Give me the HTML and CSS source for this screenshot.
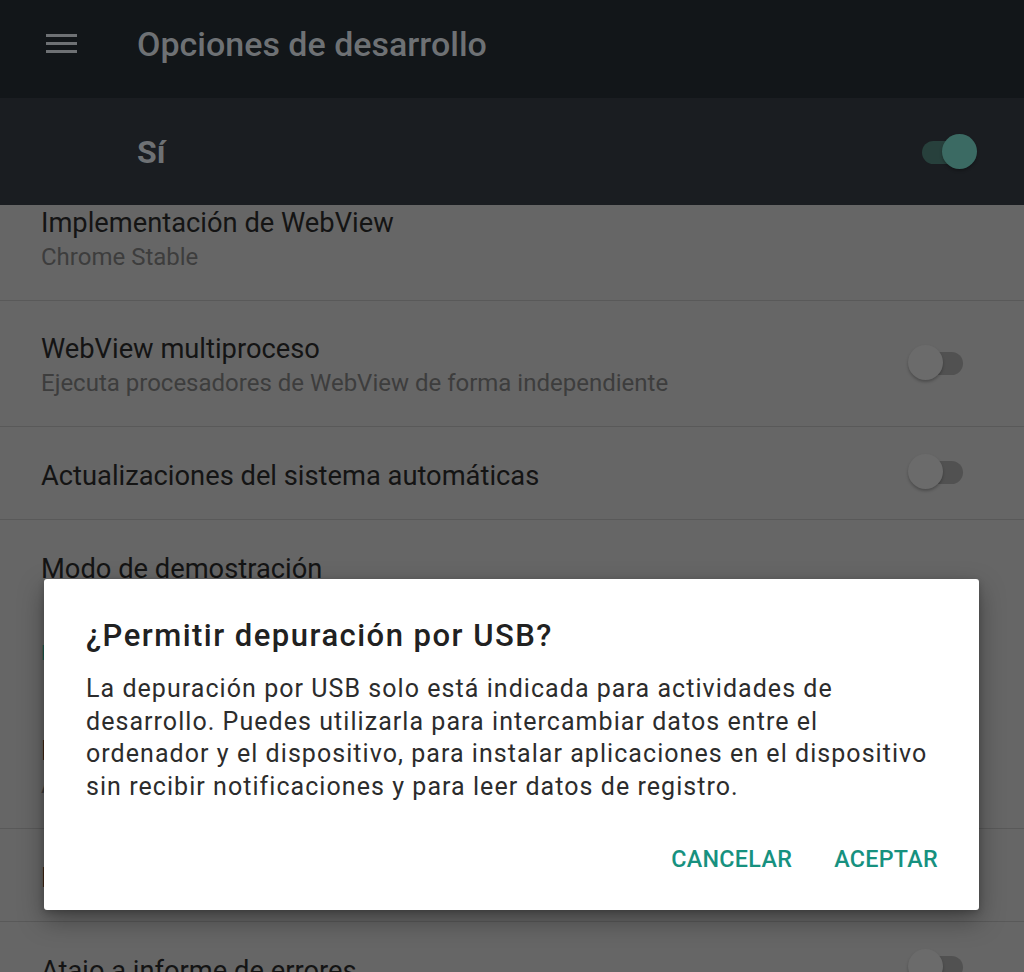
FILE: index.html
```html
<!DOCTYPE html>
<html lang="es">
<head>
<meta charset="utf-8">
<title>Opciones de desarrollo</title>
<link rel="stylesheet" href="styles.css">
</head>
<body>
<div class="screen">
  <header class="appbar">
    <div class="menu-icon"><span></span><span></span><span></span></div>
    <h1 class="appbar-title">Opciones de desarrollo</h1>
  </header>
  <div class="master">
    <span class="master-label">Sí</span>
    <span class="switch on"><span class="track"></span><span class="thumb"></span></span>
  </div>
  <div class="list-viewport">
    <ul class="list">
      <li class="item two">
        <div class="texts"><div class="title">Implementación de WebView</div><div class="summary">Chrome Stable</div></div>
      </li>
      <li class="item two">
        <div class="texts"><div class="title">WebView multiproceso</div><div class="summary">Ejecuta procesadores de WebView de forma independiente</div></div>
        <span class="switch"><span class="track"></span><span class="thumb"></span></span>
      </li>
      <li class="item one">
        <div class="texts"><div class="title">Actualizaciones del sistema automáticas</div></div>
        <span class="switch"><span class="track"></span><span class="thumb"></span></span>
      </li>
      <li class="item one nodiv">
        <div class="texts"><div class="title">Modo de demostración</div></div>
      </li>
      <li class="category">Depuración</li>
      <li class="item two">
        <div class="texts"><div class="title">Depuración por USB</div><div class="summary">Activar el modo de depuración cuando el USB esté conectado</div></div>
        <span class="switch"><span class="track"></span><span class="thumb"></span></span>
      </li>
      <li class="item one">
        <div class="texts"><div class="title">Revocar autorizaciones de depuración USB</div></div>
      </li>
      <li class="item one">
        <div class="texts"><div class="title">Atajo a informe de errores</div></div>
        <span class="switch"><span class="track"></span><span class="thumb"></span></span>
      </li>
    </ul>
  </div>

  <div class="dialog" role="dialog">
    <h2 class="dialog-title">¿Permitir depuración por USB?</h2>
    <p class="dialog-body">La depuración por USB solo está indicada para actividades de<br>desarrollo. Puedes utilizarla para intercambiar datos entre el<br>ordenador y el dispositivo, para instalar aplicaciones en el dispositivo<br>sin recibir notificaciones y para leer datos de registro.</p>
    <div class="dialog-actions">
      <button class="btn">CANCELAR</button>
      <button class="btn">ACEPTAR</button>
    </div>
  </div>
</div>
</body>
</html>
```

FILE: styles.css
```css
* { box-sizing: border-box; }
html, body { margin: 0; padding: 0; }
body {
  background: #666666;
  font-family: Roboto, "Noto Sans", sans-serif;
  width: 1024px;
  height: 972px;
  overflow: hidden;
}
.screen {
  position: relative;
  width: 1024px;
  height: 972px;
  overflow: hidden;
  display: flex;
  flex-direction: column;
}
.appbar {
  height: 98px;
  background: #121619;
  display: flex;
  align-items: center;
  flex-shrink: 0;
}
.menu-icon {
  width: 31px;
  margin-left: 46px;
  margin-top: -12px;
  display: flex;
  flex-direction: column;
  gap: 5px;
}
.menu-icon span {
  display: block;
  height: 3px;
  background: #6e7174;
}
.appbar-title {
  margin: -10px 0 0 60px;
  font-size: 34px;
  font-weight: 500;
  color: #6e7174;
}
.master {
  height: 107px;
  background: #1a1d21;
  display: flex;
  align-items: center;
  justify-content: space-between;
  padding: 0 47px 0 137px;
  flex-shrink: 0;
}
.master-label {
  font-size: 32px;
  font-weight: 700;
  color: #6e7174;
}
.switch {
  position: relative;
  width: 56px;
  height: 36px;
  flex-shrink: 0;
}
.item .switch { margin-top: -7px; }
.switch .track {
  position: absolute;
  left: 1px;
  right: 1px;
  top: 7px;
  height: 23px;
  border-radius: 12px;
  background: #515151;
}
.switch .thumb {
  position: absolute;
  left: 0;
  top: 0;
  width: 35px;
  height: 35px;
  border-radius: 50%;
  background: #6b6b6b;
  box-shadow: 0 2px 3px rgba(0,0,0,0.25);
}
.switch.on .track { background: #27403c; }
.switch.on .thumb { left: auto; right: 0; background: #3b6a63; }

.list-viewport {
  flex: 1;
  overflow: hidden;
}
.list {
  list-style: none;
  margin: -30px 0 0 0;
  padding: 0;
}
.item {
  display: flex;
  align-items: center;
  justify-content: space-between;
  padding: 5px 60px 0 41px;
  border-bottom: 1px solid #595959;
}
.item.nodiv { border-bottom: none; }
.item.two { height: 126px; }
.item.one { height: 93px; }
.title {
  font-size: 27.3px;
  color: #141414;
  line-height: 34px;
}
.summary {
  font-size: 24px;
  color: #3d3d3d;
  line-height: 34px;
}
.category {
  height: 90px;
  padding: 28px 0 0 41px;
  font-size: 21px;
  font-weight: 500;
  color: #1f5c53;
}

.dialog {
  position: absolute;
  left: 44px;
  top: 579px;
  width: 935px;
  height: 331px;
  background: #ffffff;
  border-radius: 3px;
  box-shadow: 0 10px 26px rgba(0,0,0,0.35), 0 2px 6px rgba(0,0,0,0.2);
  padding: 40px 40px 0 42px;
}
.dialog-title {
  margin: 0;
  font-size: 31px;
  font-weight: 500;
  letter-spacing: 1.48px;
  color: #212121;
  line-height: 34px;
}
.dialog-body {
  margin: 20px 0 0 0;
  font-size: 25px;
  letter-spacing: 1.05px;
  line-height: 32.7px;
  color: #2c2c2c;
}
.dialog-actions {
  display: flex;
  justify-content: flex-end;
  gap: 42px;
  margin-top: 41px;
  padding-right: 1px;
}
.btn {
  border: none;
  background: none;
  padding: 0;
  font-family: Roboto, "Noto Sans", sans-serif;
  font-size: 23.3px;
  font-weight: 500;
  color: #17917f;
  letter-spacing: 0.3px;
}
```
